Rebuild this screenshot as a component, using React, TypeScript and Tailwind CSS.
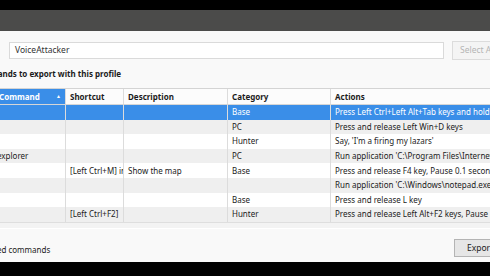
import React from "react";

type Row = {
  command: string;
  shortcut: string;
  description: string;
  category: string;
  actions: string;
};

const rows: Row[] = [
  { command: "", shortcut: "", description: "", category: "Base", actions: "Press Left Ctrl+Left Alt+Tab keys and hold till released" },
  { command: "", shortcut: "", description: "", category: "PC", actions: "Press and release Left Win+D keys" },
  { command: "", shortcut: "", description: "", category: "Hunter", actions: "Say, 'I'm a firing my lazars'" },
  { command: "explorer", shortcut: "", description: "", category: "PC", actions: "Run application 'C:\\Program Files\\Internet Explorer\\iexplore.exe'" },
  { command: "", shortcut: "[Left Ctrl+M] in", description: "Show the map", category: "Base", actions: "Press and release F4 key, Pause 0.1 seconds" },
  { command: "", shortcut: "", description: "", category: "", actions: "Run application 'C:\\Windows\\notepad.exe'" },
  { command: "", shortcut: "", description: "", category: "Base", actions: "Press and release L key" },
  { command: "", shortcut: "[Left Ctrl+F2]", description: "", category: "Hunter", actions: "Press and release Left Alt+F2 keys, Pause 1 second" },
];

const cell = "shrink-0 overflow-hidden whitespace-nowrap border-r border-[#dcdcdc] px-[4px] flex items-center";

export default function App() {
  return (
    <div className="w-[490px] h-[276px] overflow-hidden bg-black flex flex-col font-['Noto_Sans',sans-serif] text-[8px] text-[#1b1b1b]">
      <div className="h-[10px] shrink-0 bg-black" />
      <div className="h-[21px] shrink-0 bg-[#4b4b4a]" />

      <div className="flex-1 bg-[#f9f9f9] flex flex-col overflow-hidden">
        {/* Profile name */}
        <div className="flex items-start pt-[10px] h-[31px] shrink-0">
          <div className="shrink-0 ml-[9px] w-[435px] h-[17px] mt-[1px] bg-white border border-[#dadada] flex items-center px-[5px] text-[8.5px] text-[#333]">
            VoiceAttacker
          </div>
          <div className="shrink-0 ml-[8px] w-[60px] h-[19px] border border-[#dcdcdc] bg-[#f4f4f4] flex items-center px-[7px] text-[8.5px] text-[#b5b5b5] whitespace-nowrap">
            Select All
          </div>
        </div>

        <div className="h-[26px] shrink-0 flex items-center pb-[2px]">
          <span className="-ml-[28px] font-bold whitespace-nowrap">Commands to export with this profile</span>
        </div>

        {/* Grid */}
        <div className="shrink-0 border-t border-[#d4d4d4] bg-white">
          <div className="flex h-[16px] border-b border-[#d6d6d6] font-bold bg-[#fcfcfc]">
            <div className={`${cell} w-[66px] bg-[#3a8ee8] text-white justify-between pl-0`}>
              <span className="-ml-[1px]">Command</span>
              <span className="text-[5px]">▲</span>
            </div>
            <div className={`${cell} w-[58px]`}>Shortcut</div>
            <div className={`${cell} w-[104px]`}>Description</div>
            <div className={`${cell} w-[103px]`}>Category</div>
            <div className={`${cell} w-[200px] border-r-0`}>Actions</div>
          </div>
          {rows.map((r, i) => {
            const selected = i === 0;
            const bg = selected ? "bg-[#3a8ee8] text-white" : i % 2 === 1 ? "bg-[#efefef]" : "bg-white";
            return (
              <div key={i} className={`flex h-[14.6px] ${bg}`}>
                <div className={`${cell} w-[66px] pl-0`}>
                  <span className="-ml-[3px]">{r.command}</span>
                </div>
                <div className={`${cell} w-[58px]`}>{r.shortcut}</div>
                <div className={`${cell} w-[104px]`}>{r.description}</div>
                <div className={`${cell} w-[103px]`}>{r.category}</div>
                <div className={`${cell} w-[200px] border-r-0`}>{r.actions}</div>
              </div>
            );
          })}
        </div>
        <div className="h-[1px] shrink-0 bg-[#dedede]" />
        <div className="h-[5px] shrink-0 bg-[#f3f3f3]" />
        <div className="h-[1px] shrink-0 bg-white" />

        {/* Footer */}
        <div className="flex-1 flex items-center justify-between pt-[6px]">
          <span className="-ml-[66px] mt-[3px] whitespace-nowrap">Only show selected commands</span>
          <div className="w-[50px] h-[18px] mr-[-14px] border border-[#b4b4b4] bg-[#e6e6e6] flex items-center px-[12px] text-[8.5px]">
            Export
          </div>
        </div>
      </div>

      <div className="h-[14px] shrink-0 bg-black" />
    </div>
  );
}
